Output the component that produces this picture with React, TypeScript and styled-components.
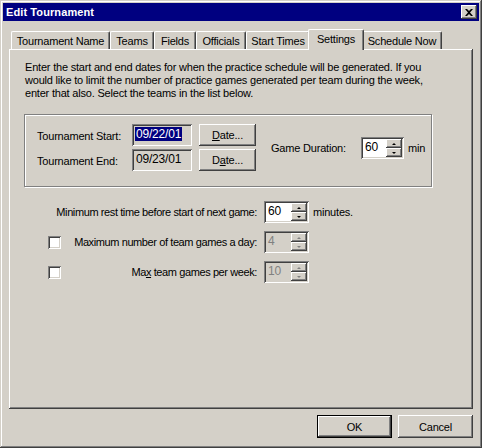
import styled, { createGlobalStyle, css } from "styled-components";

const GlobalStyle = createGlobalStyle`
  html, body {
    margin: 0;
    padding: 0;
    background: #d4d0c8;
  }
  * {
    box-sizing: border-box;
  }
  body {
    font-family: "Liberation Sans", Arial, sans-serif;
    font-size: 11px;
    letter-spacing: -0.2px;
    color: #000;
  }
`;

const raised = css`
  box-shadow: inset -1px -1px #404040, inset 1px 1px #fff,
    inset -2px -2px #808080, inset 2px 2px #d4d0c8;
`;

const sunken = css`
  box-shadow: inset 1px 1px #808080, inset -1px -1px #fff,
    inset 2px 2px #404040, inset -2px -2px #d4d0c8;
`;

const Window = styled.div`
  width: 482px;
  height: 448px;
  padding: 3px;
  background: #d4d0c8;
  display: flex;
  flex-direction: column;
  box-shadow: inset -1px -1px #404040, inset 1px 1px #d4d0c8,
    inset -2px -2px #808080, inset 2px 2px #fff;
`;

const TitleBar = styled.div`
  height: 18px;
  background: #000080;
  color: #fff;
  display: flex;
  align-items: center;
  justify-content: space-between;
  padding: 0 2px 0 2px;
`;

const Title = styled.span`
  font-weight: bold;
  font-size: 11px;
  padding-left: 1px;
  letter-spacing: 0.1px;
`;

const CloseBtn = styled.div`
  width: 16px;
  height: 14px;
  background: #d4d0c8;
  display: flex;
  align-items: center;
  justify-content: center;
  ${raised}
`;

const Client = styled.div`
  flex: 1;
  display: flex;
  flex-direction: column;
  padding: 8px 6px 0 6px;
`;

const TabRow = styled.div`
  height: 20px;
  display: flex;
  align-items: flex-end;
  padding-left: 2px;
`;

const Tab = styled.div<{ $w: number; $active?: boolean }>`
  width: ${(p) => p.$w}px;
  height: 18px;
  display: flex;
  align-items: center;
  justify-content: center;
  background: #d4d0c8;
  border-top: 1px solid #fff;
  border-left: 1px solid #fff;
  border-right: 1px solid #404040;
  border-top-left-radius: 2px;
  border-top-right-radius: 2px;
  box-shadow: inset -1px 0 #808080;
  padding-top: 1px;
  white-space: nowrap;
  ${(p) =>
    p.$active &&
    css`
      position: relative;
      z-index: 1;
      height: 21px;
      margin: 0 -2px -1px -2px;
      padding-bottom: 3px;
    `}
`;

const Panel = styled.div`
  height: 360px;
  display: flex;
  flex-direction: column;
  padding: 12px 16px 0 16px;
  box-shadow: inset -1px -1px #404040, inset 1px 1px #fff,
    inset -2px -2px #808080;
`;

const Intro = styled.p`
  margin: 0;
  line-height: 13px;
`;

const GroupBox = styled.div`
  margin: 14px 0 0 -1px;
  width: 408px;
  height: 73px;
  border: 1px solid #808080;
  box-shadow: 1px 1px 0 #fff, inset 1px 1px 0 #fff;
  padding: 9px 0 0 12px;
  display: grid;
  grid-template-columns: 95px 60px 64px auto;
  grid-template-rows: 22px 22px;
  column-gap: 0;
  row-gap: 3px;
  align-items: center;
`;

const DateLabel = styled.span`
  padding-top: 1px;
`;

const DateField = styled.div`
  width: 60px;
  height: 22px;
  padding: 3px 0 0 3px;
  background: #d4d0c8;
  ${sunken}
`;

const Selected = styled.span`
  background: #000080;
  color: #fff;
  font-size: 12px;
  padding: 0 1px;
`;

const FieldText = styled.span`
  font-size: 12px;
  padding-left: 1px;
`;

const Button = styled.div<{ $w: number; $default?: boolean }>`
  width: ${(p) => p.$w}px;
  height: 23px;
  display: flex;
  align-items: center;
  justify-content: center;
  background: #d4d0c8;
  ${(p) =>
    p.$default
      ? css`
          border: 1px solid #000;
          box-shadow: inset -1px -1px #404040, inset 1px 1px #fff,
            inset -2px -2px #808080;
        `
      : raised}
`;

const DateButton = styled(Button)`
  margin-left: 7px;
  height: 22px;
`;

const Duration = styled.div`
  grid-column: 4;
  grid-row: 1 / 3;
  display: flex;
  align-items: center;
  padding-left: 15px;
  padding-top: 1px;
`;

const DurationLabel = styled.span`
  width: 90px;
`;

const Unit = styled.span`
  margin-left: 4px;
`;

const Options = styled.div`
  margin: 14px 0 0 23px;
  display: grid;
  grid-template-columns: 13px 203px 45px auto;
  grid-auto-rows: 22px;
  row-gap: 8px;
  column-gap: 0;
  align-items: center;
`;

const OptLabel = styled.span<{ $wide?: boolean }>`
  grid-column: ${(p) => (p.$wide ? "1 / 3" : "2")};
  justify-self: end;
  margin-right: 7px;
  white-space: nowrap;
  letter-spacing: -0.4px;
`;

const Check = styled.div`
  width: 13px;
  height: 13px;
  background: #fff;
  ${sunken}
`;

const Spin = styled.div<{ $w: number; $disabled?: boolean }>`
  width: ${(p) => p.$w}px;
  height: 22px;
  display: flex;
  padding: 2px;
  background: ${(p) => (p.$disabled ? "#d4d0c8" : "#fff")};
  color: ${(p) => (p.$disabled ? "#808080" : "#000")};
  ${sunken}
`;

const SpinValue = styled.span`
  flex: 1;
  font-size: 12px;
  padding: 1px 0 0 2px;
`;

const SpinButtons = styled.div`
  width: 16px;
  display: flex;
  flex-direction: column;
`;

const SpinBtn = styled.div`
  flex: 1;
  display: flex;
  align-items: center;
  justify-content: center;
  background: #d4d0c8;
  ${raised}
`;

const Arrow = styled.span<{ $down?: boolean; $disabled?: boolean }>`
  width: 0;
  height: 0;
  border-left: 2px solid transparent;
  border-right: 2px solid transparent;
  ${(p) =>
    p.$down
      ? css`
          border-top: 2px solid ${p.$disabled ? "#808080" : "#000"};
        `
      : css`
          border-bottom: 2px solid ${p.$disabled ? "#808080" : "#000"};
        `}
`;

const Footer = styled.div`
  display: flex;
  justify-content: flex-end;
  gap: 6px;
  margin-top: 6px;
`;

const SpinBox = ({
  value,
  w,
  disabled,
}: {
  value: string;
  w: number;
  disabled?: boolean;
}) => (
  <Spin $w={w} $disabled={disabled}>
    <SpinValue>{value}</SpinValue>
    <SpinButtons>
      <SpinBtn>
        <Arrow $disabled={disabled} />
      </SpinBtn>
      <SpinBtn>
        <Arrow $down $disabled={disabled} />
      </SpinBtn>
    </SpinButtons>
  </Spin>
);

const tabs = [
  { label: "Tournament Name", w: 99 },
  { label: "Teams", w: 44 },
  { label: "Fields", w: 42 },
  { label: "Officials", w: 50 },
  { label: "Start Times", w: 64 },
  { label: "Settings", w: 56, active: true },
  { label: "Schedule Now", w: 80 },
];

export default function App() {
  return (
    <>
      <GlobalStyle />
      <Window>
        <TitleBar>
          <Title>Edit Tournament</Title>
          <CloseBtn>
            <svg width="8" height="7" viewBox="0 0 8 7">
              <path
                d="M0 0h2l2 2 2-2h2L5 3.5 8 7H6L4 5 2 7H0l3-3.5z"
                fill="#000"
              />
            </svg>
          </CloseBtn>
        </TitleBar>
        <Client>
          <TabRow>
            {tabs.map((t) => (
              <Tab key={t.label} $w={t.w} $active={t.active}>
                {t.label}
              </Tab>
            ))}
          </TabRow>
          <Panel>
            <Intro>
              Enter the start and end dates for when the practice schedule will
              be generated. If you
              <br />
              would like to limit the number of practice games generated per
              team during the week,
              <br />
              enter that also. Select the teams in the list below.
            </Intro>
            <GroupBox>
              <DateLabel>Tournament Start:</DateLabel>
              <DateField>
                <Selected>09/22/01</Selected>
              </DateField>
              <DateButton $w={57}>
                <span>
                  <u>D</u>ate...
                </span>
              </DateButton>
              <Duration>
                <DurationLabel>Game Duration:</DurationLabel>
                <SpinBox value="60" w={43} />
                <Unit>min</Unit>
              </Duration>
              <DateLabel>Tournament End:</DateLabel>
              <DateField>
                <FieldText>09/23/01</FieldText>
              </DateField>
              <DateButton $w={57}>
                <span>
                  D<u>a</u>te...
                </span>
              </DateButton>
            </GroupBox>
            <Options>
              <OptLabel $wide>Minimum rest time before start of next game:</OptLabel>
              <SpinBox value="60" w={45} />
              <Unit>minutes.</Unit>

              <Check />
              <OptLabel>Maximum number of team games a day:</OptLabel>
              <SpinBox value="4" w={45} disabled />
              <span />

              <Check />
              <OptLabel>
                Ma<u>x</u> team games per week:
              </OptLabel>
              <SpinBox value="10" w={45} disabled />
              <span />
            </Options>
          </Panel>
          <Footer>
            <Button $w={75} $default>
              OK
            </Button>
            <Button $w={75}>Cancel</Button>
          </Footer>
        </Client>
      </Window>
    </>
  );
}
